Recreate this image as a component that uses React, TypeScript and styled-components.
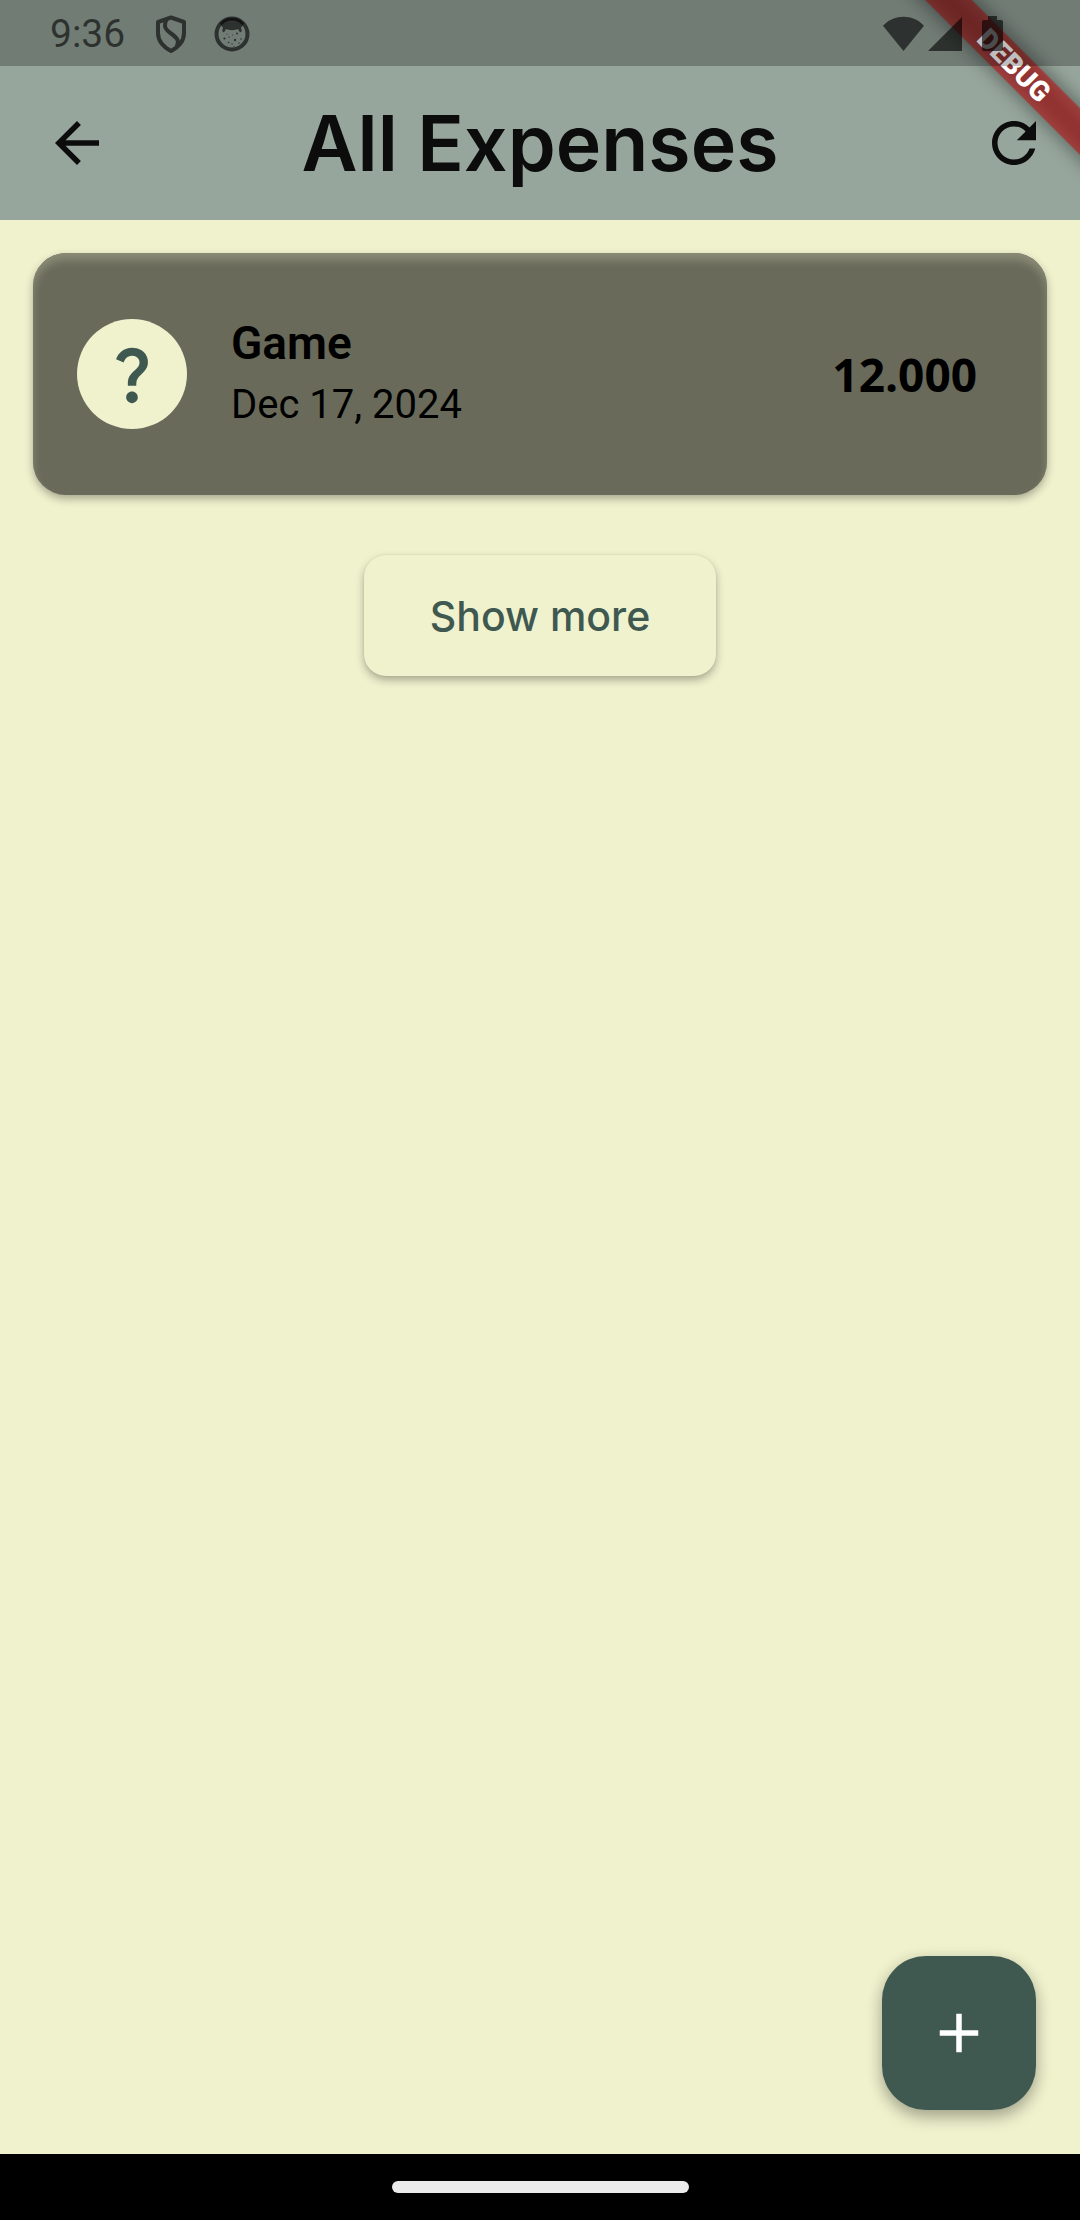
import React from "react";
import styled, { createGlobalStyle } from "styled-components";

const color = {
  cream: "#f0f2ce",
  sage: "#97a69c",
  pine: "#3f5951",
  olive: "#696a5a",
  oliveLight: "#8a8b76",
  ink: "#0c0c0c",
};

const display = `Inter, "Liberation Sans", sans-serif`;
const figures = `"Open Sans", "Liberation Sans", sans-serif`;
const body = `Roboto, "Liberation Sans", sans-serif`;

const GlobalStyle = createGlobalStyle`
  *, *::before, *::after { box-sizing: border-box; }
  body { margin: 0; background: ${color.cream}; }
  button { border: 0; padding: 0; margin: 0; cursor: pointer; }
  h1, h2, p, ul { margin: 0; padding: 0; }
  svg { display: block; flex: none; }
`;

const Screen = styled.div`
  min-height: 100vh;
  display: flex;
  flex-direction: column;
  position: relative;
  overflow: hidden;
  background: ${color.cream};
  font-family: ${body};
`;

const Top = styled.header`
  background: ${color.sage};
`;

const StatusBar = styled.div`
  position: relative;
  z-index: 2;
  height: 66px;
  padding: 2px 77px 0 50px;
  display: flex;
  align-items: center;
  justify-content: space-between;
  background: rgba(0, 0, 0, 0.25);
  color: rgba(0, 0, 0, 0.6);
`;

const StatusGroup = styled.div<{ $gap: number }>`
  display: flex;
  align-items: center;
  gap: ${(p) => p.$gap}px;
`;

const Clock = styled.time`
  font-size: 39px;
  line-height: 48px;
`;

const AppBar = styled.div`
  height: 154px;
  padding: 0 33px;
  display: grid;
  grid-template-columns: 88px 1fr 88px;
  align-items: center;
`;

const Title = styled.h1`
  text-align: center;
  font-family: ${display};
  font-size: 77px;
  line-height: 88px;
  font-weight: 600;
  color: ${color.ink};
`;

const BarButton = styled.button<{ $end?: boolean }>`
  height: 88px;
  padding: ${(p) => (p.$end ? "0" : "0 11px")};
  display: flex;
  align-items: center;
  justify-content: ${(p) => (p.$end ? "flex-end" : "flex-start")};
  background: none;
  color: ${color.ink};
`;

const RibbonCorner = styled.div`
  position: absolute;
  top: 0;
  right: 0;
  width: 220px;
  height: 220px;
  overflow: hidden;
  z-index: 1;
  pointer-events: none;
`;

const Ribbon = styled.div`
  position: absolute;
  top: 49px;
  right: -94px;
  width: 320px;
  height: 33px;
  transform: rotate(45deg);
  text-align: center;
  font-size: 28px;
  line-height: 33px;
  font-weight: 900;
  color: #fff;

  &::before,
  &::after {
    content: "";
    position: absolute;
    inset: 0;
    z-index: -1;
  }
  &::before {
    background: rgba(0, 0, 0, 0.5);
    filter: blur(10px);
  }
  &::after {
    background: rgba(183, 28, 28, 0.63);
  }
`;

const Main = styled.main`
  flex: 1;
  padding: 33px;
  display: flex;
  flex-direction: column;
  align-items: center;
  gap: 60px;
`;

const List = styled.ul`
  width: 100%;
  list-style: none;
`;

const Card = styled.li`
  padding: 66px 70px 66px 44px;
  display: flex;
  align-items: center;
  gap: 44px;
  border-radius: 33px;
  background: ${color.olive};
  box-shadow: inset 0 7px 8px ${color.oliveLight}, 0 4px 8px rgba(0, 0, 0, 0.3);
  color: #000;
`;

const Avatar = styled.span`
  flex: none;
  width: 110px;
  height: 110px;
  display: grid;
  place-items: center;
  border-radius: 50%;
  background: ${color.cream};
  color: ${color.pine};
`;

const Details = styled.div`
  flex: 1;
  display: flex;
  flex-direction: column;
  gap: 14px;
`;

const Name = styled.h2`
  font-size: 46px;
  line-height: 48px;
  font-weight: 600;
`;

const DateText = styled.p`
  font-size: 40px;
  line-height: 48px;
`;

const Amount = styled.span`
  font-family: ${figures};
  font-size: 46px;
  line-height: 48px;
  font-weight: 700;
`;

const MoreButton = styled.button`
  height: 121px;
  padding: 0 66px;
  border-radius: 22px;
  background: ${color.cream};
  box-shadow: 0 4px 8px rgba(0, 0, 0, 0.3), 0 0 2px rgba(0, 0, 0, 0.08);
  color: ${color.pine};
  font-family: ${display};
  font-size: 41px;
  line-height: 48px;
  font-weight: 500;
`;

const Fab = styled.button`
  align-self: flex-end;
  margin: 0 44px 44px 0;
  width: 154px;
  height: 154px;
  display: grid;
  place-items: center;
  border-radius: 44px;
  background: ${color.pine};
  box-shadow: 0 8px 16px rgba(0, 0, 0, 0.26), 0 2px 16px rgba(0, 0, 0, 0.1);
  color: #fff;
`;

const NavBar = styled.footer`
  height: 66px;
  padding-top: 27px;
  background: #000;
`;

const Pill = styled.div`
  width: 297px;
  height: 12px;
  margin: 0 auto;
  border-radius: 6px;
  background: #ebebeb;
`;

function Icon({ d, size = 66 }: { d: string; size?: number }) {
  return (
    <svg width={size} height={size} viewBox="0 0 24 24" fill="currentColor" aria-hidden="true">
      <path d={d} />
    </svg>
  );
}

const paths = {
  back: "M20 11H7.83l5.59-5.59L12 4l-8 8 8 8 1.41-1.41L7.83 13H20v-2z",
  refresh:
    "M17.65 6.35C16.2 4.9 14.21 4 12 4c-4.42 0-7.99 3.58-7.99 8s3.57 8 7.99 8c3.73 0 6.84-2.55 7.73-6h-2.08c-.82 2.33-3.04 4-5.65 4-3.31 0-6-2.69-6-6s2.69-6 6-6c1.66 0 3.14.69 4.22 1.78L13 11h7V4l-2.35 2.35z",
  add: "M19 13h-6v6h-2v-6H5v-2h6V5h2v6h6v2z",
  question:
    "M11.07 12.85c.77-1.39 2.25-2.21 3.11-3.44.91-1.29.4-3.7-2.18-3.7-1.69 0-2.52 1.28-2.87 2.34L6.54 6.96C7.25 4.83 9.18 3 11.99 3c2.35 0 3.96 1.07 4.78 2.41.7 1.15 1.11 3.3.03 4.9-1.2 1.77-2.35 2.31-2.97 3.45-.25.46-.35.76-.35 2.24h-2.89c-.01-.78-.13-2.05.48-3.15zM14 20c0 1.1-.9 2-2 2s-2-.9-2-2 .9-2 2-2 2 .9 2 2z",
};

function ShieldIcon() {
  return (
    <svg width="32" height="38" viewBox="0 0 32 38" fill="none" stroke="currentColor" strokeWidth="4" strokeLinejoin="round" aria-hidden="true">
      <path d="M16 2.500 29 7v11c0 8-5.500 14-13 18C8.500 32 3 26 3 18V7z M11.500 4.500C8 12 11 15 16 18.500c5.500 4 9 7 5.500 13" />
    </svg>
  );
}

function FaceIcon() {
  return (
    <svg width="36" height="36" viewBox="0 0 36 36" fill="currentColor" aria-hidden="true">
      <circle cx="18" cy="18" r="15.500" fill="none" stroke="currentColor" strokeWidth="4" />
      <path d="M6 7C12 0 24 0 30 7c-1 2-2 3.500-3 5l1 3-2 1.500-2-3.500c-3 1.500-9 1.500-12 0l-2 3.500L8 15l1-3C8 10.500 7 9 6 7z" />
      <g>
        <circle cx="10.500" cy="22.500" r="1.100" />
        <circle cx="23" cy="17.500" r="1" />
        <circle cx="21" cy="24" r="1.200" />
        <circle cx="15" cy="21" r=".7" />
        <circle cx="18.500" cy="19" r=".6" />
        <circle cx="14.500" cy="26.500" r=".8" />
        <circle cx="27" cy="23" r=".8" />
        <circle cx="18" cy="28" r=".7" />
        <circle cx="13" cy="18" r=".6" />
        <circle cx="25" cy="27" r=".7" />
        <circle cx="20" cy="30.500" r=".6" />
      </g>
    </svg>
  );
}

function WifiIcon() {
  return (
    <svg width="41" height="36" viewBox="0 0 41 36" fill="currentColor" aria-hidden="true">
      <path d="M20.500 35 0 9.700C11-2.300 30-2.300 41 9.700z" />
    </svg>
  );
}

function SignalIcon() {
  return (
    <svg width="34" height="34" viewBox="0 0 34 34" fill="currentColor" aria-hidden="true">
      <path d="M34 0v34H0z" />
    </svg>
  );
}

function BatteryIcon() {
  return (
    <svg width="21" height="36" viewBox="0 0 21 36" fill="currentColor" aria-hidden="true">
      <path d="M6 0h9v4h4a2 2 0 0 1 2 2v27a2 2 0 0 1-2 2H2a2 2 0 0 1-2-2V6a2 2 0 0 1 2-2h4z" />
    </svg>
  );
}

const expenses = [{ name: "Game", date: "Dec 17, 2024", amount: "12.000" }];

export default function App() {
  return (
    <Screen>
      <GlobalStyle />
      <Top>
        <StatusBar>
          <StatusGroup $gap={30}>
            <Clock>9:36</Clock>
            <StatusGroup $gap={27}>
              <ShieldIcon />
              <FaceIcon />
            </StatusGroup>
          </StatusGroup>
          <StatusGroup $gap={20}>
            <StatusGroup $gap={4}>
              <WifiIcon />
              <SignalIcon />
            </StatusGroup>
            <BatteryIcon />
          </StatusGroup>
        </StatusBar>
        <AppBar>
          <BarButton type="button" aria-label="Back">
            <Icon d={paths.back} />
          </BarButton>
          <Title>All Expenses</Title>
          <BarButton type="button" aria-label="Refresh" $end>
            <Icon d={paths.refresh} />
          </BarButton>
        </AppBar>
      </Top>
      <RibbonCorner>
        <Ribbon>DEBUG</Ribbon>
      </RibbonCorner>
      <Main>
        <List>
          {expenses.map((e) => (
            <Card key={e.name}>
              <Avatar>
                <Icon d={paths.question} size={70} />
              </Avatar>
              <Details>
                <Name>{e.name}</Name>
                <DateText>{e.date}</DateText>
              </Details>
              <Amount>{e.amount}</Amount>
            </Card>
          ))}
        </List>
        <MoreButton type="button">Show more</MoreButton>
      </Main>
      <Fab type="button" aria-label="Add expense">
        <Icon d={paths.add} />
      </Fab>
      <NavBar>
        <Pill />
      </NavBar>
    </Screen>
  );
}
